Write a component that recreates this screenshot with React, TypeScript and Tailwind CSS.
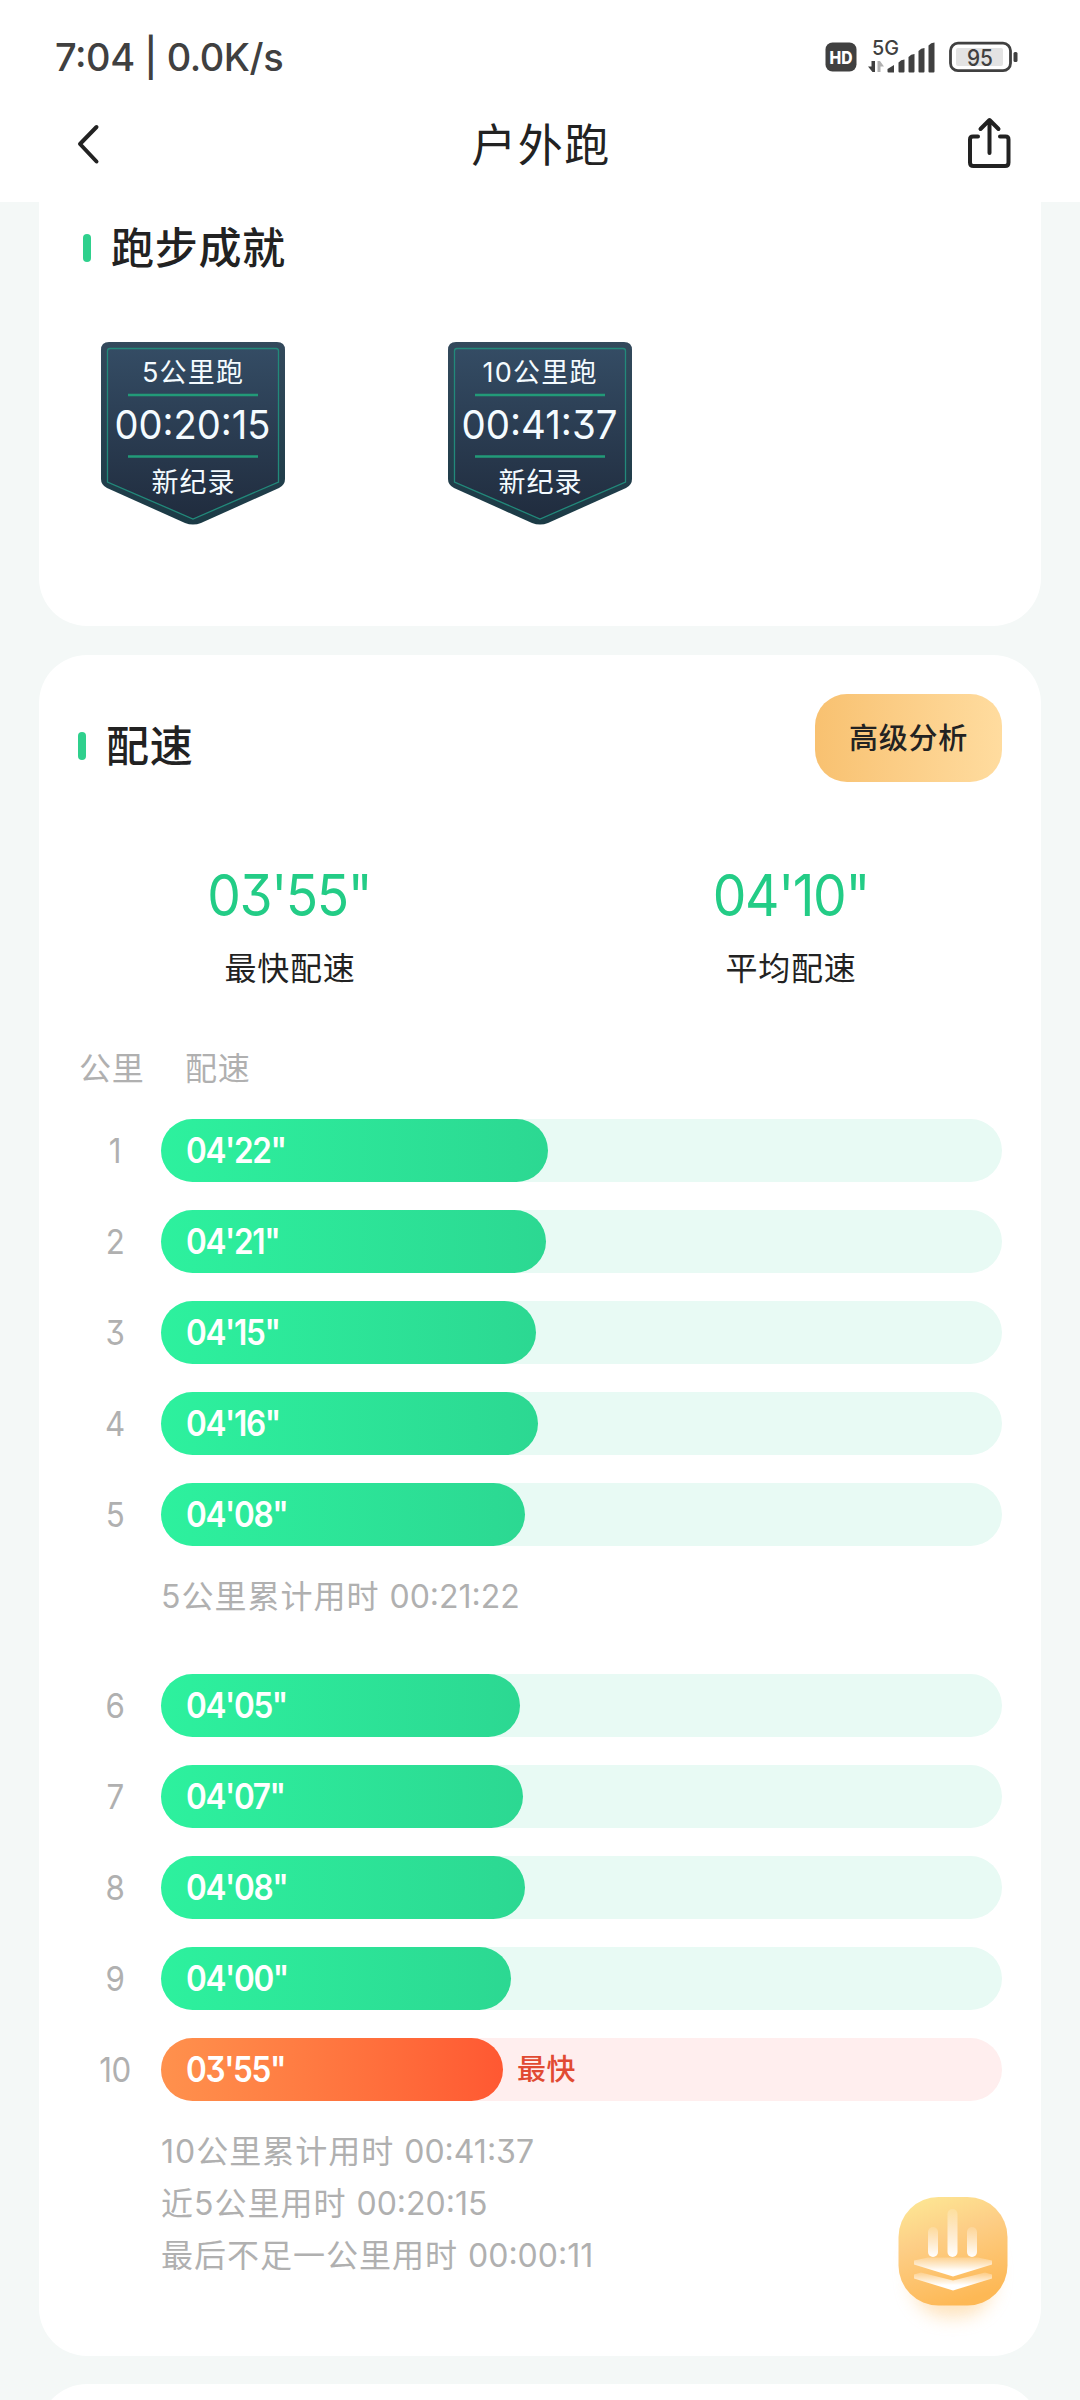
import React from 'react';

type Split = { km: number; pace: string; width: number; fastest?: boolean };

const firstSplits: Split[] = [
  { km: 1, pace: `04'22"`, width: 387 },
  { km: 2, pace: `04'21"`, width: 385 },
  { km: 3, pace: `04'15"`, width: 375 },
  { km: 4, pace: `04'16"`, width: 377 },
  { km: 5, pace: `04'08"`, width: 364 },
];

const lastSplits: Split[] = [
  { km: 6, pace: `04'05"`, width: 359 },
  { km: 7, pace: `04'07"`, width: 362 },
  { km: 8, pace: `04'08"`, width: 364 },
  { km: 9, pace: `04'00"`, width: 350 },
  { km: 10, pace: `03'55"`, width: 342, fastest: true },
];

function StatusBar() {
  return (
    <div className="h-[90px] pt-[33px] pl-[55px] pr-[62px] flex justify-between text-[#404040]">
      <div className="h-12 leading-[48px] text-[38px] font-medium tracking-[-0.45px] whitespace-pre">7:04 | 0.0K/s</div>
      <svg width="194" height="48" viewBox="824 33 194 48">
        <rect x="825.500" y="42.500" width="31" height="29" rx="7" fill="#404040" />
        <text x="841" y="63.500" textAnchor="middle" fontSize="17.500" fontWeight="800" fill="#fff" textLength="23" lengthAdjust="spacingAndGlyphs">HD</text>
        <text x="872" y="55" fontSize="20" fontWeight="500" fill="#404040" textLength="27" lengthAdjust="spacingAndGlyphs">5G</text>
        <path d="M875 61v11h-2.500l-4.500-5.500h3.500v-5.500z" fill="#404040" />
        <path d="M877.500 72v-11h2.500l4 5.500h-3.500v5.500z" fill="#b0b0b0" />
        <path d="M887.500 69l6.500-4v7.500h-5.500q-1 0-1-1z" fill="#404040" />
        <path d="M898.500 62.500q2.500-3 6-3v12q0 1-1 1h-4q-1 0-1-1z" fill="#404040" />
        <path d="M908.500 57q2.500-3 6-3v17.500q0 1-1 1h-4q-1 0-1-1z" fill="#404040" />
        <path d="M918.500 51q2.500-3 6-3v23.500q0 1-1 1h-4q-1 0-1-1z" fill="#404040" />
        <path d="M928.500 45.500q2.500-3 6-3v29q0 1-1 1h-4q-1 0-1-1z" fill="#404040" />
        <rect x="950.500" y="43.200" width="60" height="27.500" rx="7.500" fill="none" stroke="#404040" strokeWidth="2.800" />
        <rect x="956" y="48" width="47" height="18" rx="2" fill="#e3e3e3" />
        <text x="980" y="65.500" textAnchor="middle" fontSize="22.500" fontWeight="500" fill="#404040" textLength="26" lengthAdjust="spacingAndGlyphs">95</text>
        <rect x="1013.500" y="52" width="4" height="10" rx="1.500" fill="#404040" />
      </svg>
    </div>
  );
}

function NavBar() {
  return (
    <div className="h-[112px] px-[68px] pb-1 flex items-center justify-between">
      <svg width="40" height="56" viewBox="68 116 40 56" fill="none" stroke="#222" strokeWidth="4" strokeLinecap="round" strokeLinejoin="round">
        <path d="M96.500 127L80 144l16.500 17.500" />
      </svg>
      <h1 className="pt-1 pl-[10px] text-[45px] leading-[60px] tracking-[1.5px] text-[#222]">户外跑</h1>
      <svg width="48" height="56" viewBox="964 116 48 56" fill="none" stroke="#222" strokeWidth="4" strokeLinecap="round" strokeLinejoin="round">
        <path d="M978 136.500h-5q-3 0-3 3v23q0 3.500 3.500 3.500h31.500q3.500 0 3.500-3.500v-23q0-3-3-3h-5.500" />
        <path d="M989.500 153v-32M980.500 129l9-9 9 9" />
      </svg>
    </div>
  );
}

function SectionTitle({ children }: { children: React.ReactNode }) {
  return (
    <div className="flex items-center">
      <span className="w-2 h-7 rounded-full bg-[#2fd08d]" />
      <h2 className="ml-[20px] text-[43px] leading-[60px] font-medium tracking-[0.7px] text-[#222]">{children}</h2>
    </div>
  );
}

function Badge({ distance, time, id }: { distance: string; time: string; id: string }) {
  return (
    <svg width="184" height="183" viewBox="0 0 184 183">
      <defs>
        <linearGradient id={`${id}-rim`} x1="0" y1="0" x2="0" y2="1">
          <stop offset="0" stopColor="#33495c" />
          <stop offset="1" stopColor="#1b3a45" />
        </linearGradient>
        <linearGradient id={`${id}-face`} x1="0" y1="0" x2="0" y2="1">
          <stop offset="0" stopColor="#344c64" />
          <stop offset="1" stopColor="#202c3e" />
        </linearGradient>
      </defs>
      <path d="M8 0h168q8 0 8 8v129q0 6-6 9l-78 35q-8 3-16 0l-78-35q-6-3-6-9v-129q0-8 8-8z" fill={`url(#${id}-rim)`} />
      <path d="M9 6.500h166q2.500 0 2.500 2.500v131l-85.500 37-85.500-37v-131q0-2.500 2.500-2.500z" fill={`url(#${id}-face)`} stroke="#22897a" strokeWidth="1.300" />
      <path d="M27 53h130M27 114.500h130" stroke="#229a78" strokeWidth="2.600" />
      <g fill="#f4fbff" textAnchor="middle">
        <text x="91.500" y="39.500" fontSize="27" textLength={distance.length > 4 ? 114 : 101}>{distance}</text>
        <text x="91.500" y="96.500" fontSize="40" textLength="156" lengthAdjust="spacingAndGlyphs">{time}</text>
        <text x="92" y="149.500" fontSize="27" textLength="83">新纪录</text>
      </g>
    </svg>
  );
}

function PaceStat({ value, label }: { value: string; label: string }) {
  return (
    <div className="flex-1 flex flex-col items-center">
      <div className="h-[72px] leading-[72px] text-[58px] tracking-[-1.5px] scale-x-[0.92] text-[#23cc86]">{value}</div>
      <div className="mt-[14px] pl-px h-[48px] leading-[48px] text-[32px] tracking-[0.7px] text-[#222]">{label}</div>
    </div>
  );
}

function SplitRow({ split }: { split: Split }) {
  return (
    <div className="h-[63px] flex items-center">
      <div className="w-[74px] mr-[9px] text-center text-[34px] tracking-[-0.5px] scale-x-[0.92] text-[#b0b0b0]">{split.km}</div>
      <div className={`flex-1 h-full rounded-full flex items-center ${split.fastest ? 'bg-[#ffeeee]' : 'bg-[#e8faf4]'}`}>
        <div
          className={`h-full rounded-full pl-[25px] leading-[63px] text-[35px] font-semibold text-white bg-linear-to-r ${split.fastest ? 'from-[#ff914d] to-[#ff5832]' : 'from-[#2df19e] to-[#2cd892]'}`}
          style={{ width: split.width }}
        >
          <span className="inline-block origin-left scale-x-90 tracking-[-1.5px]">{split.pace}</span>
        </div>
        {split.fastest && <span className="ml-[14px] pt-px text-[29px] font-medium tracking-[0.5px] text-[#e14a32]">最快</span>}
      </div>
    </div>
  );
}

function Total({ label, time }: { label: string; time: string }) {
  return (
    <p className="ml-[83px] h-[52px] leading-[53px] text-[32px] text-[#b0b0b0]">
      <span className="tracking-[1px]">{label} </span>{time}
    </p>
  );
}

function FloatingChart() {
  return (
    <svg className="fixed left-[868px] top-[2177px]" width="170" height="180" viewBox="868 2176 170 180">
      <defs>
        <linearGradient id="fab" x1="0.150" y1="0" x2="0.500" y2="1">
          <stop offset="0" stopColor="#fde794" />
          <stop offset="0.400" stopColor="#fdce86" />
          <stop offset="1" stopColor="#fdb855" />
        </linearGradient>
        <linearGradient id="bar" x1="0" y1="0" x2="0" y2="1">
          <stop offset="0" stopColor="#fff" stopOpacity="0.150" />
          <stop offset="1" stopColor="#fff" />
        </linearGradient>
        <linearGradient id="layer" x1="0" y1="0" x2="0" y2="1">
          <stop offset="0" stopColor="#fff" stopOpacity="0.200" />
          <stop offset="0.700" stopColor="#fff" />
        </linearGradient>
        <filter id="glow" x="-50%" y="-50%" width="200%" height="200%">
          <feGaussianBlur stdDeviation="9" />
        </filter>
      </defs>
      <rect x="912" y="2228" width="82" height="88" rx="36" fill="#fdc77a" opacity="0.500" filter="url(#glow)" />
      <rect x="898.500" y="2196" width="109" height="108.500" rx="40" fill="url(#fab)" />
      <rect x="928" y="2226" width="10" height="30" rx="5" fill="url(#bar)" />
      <rect x="947.500" y="2208" width="10" height="48" rx="5" fill="url(#bar)" />
      <rect x="967" y="2226" width="10" height="30" rx="5" fill="url(#bar)" />
      <path d="M914 2273.500l7-2 32 8 32-8 7 2v4l-39 12-39-12z" fill="url(#layer)" />
      <path d="M914 2259.500l14-3h50l14 3v4l-39 12-39-12z" fill="url(#layer)" />
    </svg>
  );
}

export default function App() {
  return (
    <div className="h-[2400px] w-[1080px] overflow-hidden bg-[#f4f8f7] font-[Inter,'Noto_Sans_CJK_SC',sans-serif] [font-feature-settings:'cv09','calt']">
      <header className="bg-white">
        <StatusBar />
        <NavBar />
      </header>

      <main className="px-[39px]">
        <section className="h-[424px] px-[44px] pt-[16px] bg-white rounded-b-[48px]">
          <SectionTitle>跑步成就</SectionTitle>
          <div className="mt-16 ml-[18px] flex gap-[163px]">
            <Badge id="five" distance="5公里跑" time="00:20:15" />
            <Badge id="ten" distance="10公里跑" time="00:41:37" />
          </div>
        </section>

        <section className="mt-[29px] h-[1701px] px-[39px] pt-[39px] bg-white rounded-[48px]">
          <div className="flex justify-between">
            <div className="pt-[22px]">
              <SectionTitle>配速</SectionTitle>
            </div>
            <button className="w-[187px] h-[88px] pt-px rounded-[32px] bg-linear-to-r from-[#f8c170] to-[#ffdc9f] text-[29px] font-medium tracking-[0.8px] text-[#222]">高级分析</button>
          </div>

          <div className="-mx-[39px] mt-[77px] flex">
            <PaceStat value={`03'55"`} label="最快配速" />
            <PaceStat value={`04'10"`} label="平均配速" />
          </div>

          <div className="mt-[52px] h-[48px] flex leading-[48px] text-[32px] tracking-[0.8px] text-[#b0b0b0]">
            <span className="w-[107px] pl-px">公里</span>
            <span>配速</span>
          </div>

          <div className="mt-[26px] flex flex-col gap-7">
            {firstSplits.map((s) => <SplitRow key={s.km} split={s} />)}
          </div>
          <div className="mt-[24px]">
            <Total label="5公里累计用时" time="00:21:22" />
          </div>
          <div className="mt-[52px] flex flex-col gap-7">
            {lastSplits.map((s) => <SplitRow key={s.km} split={s} />)}
          </div>
          <div className="mt-[24px]">
            <Total label="10公里累计用时" time="00:41:37" />
            <Total label="近5公里用时" time="00:20:15" />
            <Total label="最后不足一公里用时" time="00:00:11" />
          </div>
        </section>

        <section className="mt-[28px] h-[120px] bg-white rounded-[48px]" />
      </main>

      <FloatingChart />
    </div>
  );
}
